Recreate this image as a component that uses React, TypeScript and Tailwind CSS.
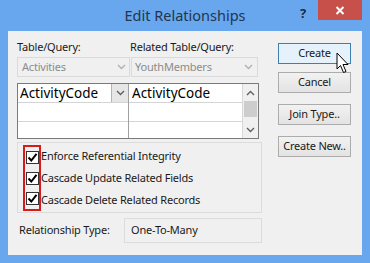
const FONT = { fontFamily: '"Noto Sans", "Open Sans", sans-serif' };

function Chevron({ up = false, color = "#606060" }: { up?: boolean; color?: string }) {
  return (
    <svg width="9" height="6" viewBox="0 0 9 6" className={up ? "rotate-180" : ""}>
      <path d="M1 1 L4.5 4.5 L8 1" fill="none" stroke={color} strokeWidth="1.4" />
    </svg>
  );
}

function Check() {
  return (
    <span className="flex h-[13px] w-[13px] items-center justify-center border border-[#333] bg-white">
      <svg width="11" height="11" viewBox="0 0 11 11">
        <path d="M1.5 5.5 L4.3 8.5 L9.5 1.8" fill="none" stroke="#000" strokeWidth="2" />
      </svg>
    </span>
  );
}

function Btn({ label, active = false }: { label: string; active?: boolean }) {
  return (
    <div
      className={
        "flex h-[21px] w-[73px] items-center justify-center whitespace-nowrap border " +
        (active
          ? "border-[#3c7fb1] bg-[#e5f1fb]"
          : "border-[#acacac] bg-gradient-to-b from-[#f2f2f2] to-[#e3e3e3]")
      }
    >
      {label}
    </div>
  );
}

export default function App() {
  const checks = [
    "Enforce Referential Integrity",
    "Cascade Update Related Fields",
    "Cascade Delete Related Records",
  ];
  return (
    <div className="relative flex h-[263px] w-[370px] flex-col bg-[#68a7ee]" style={FONT}>
      {/* title bar */}
      <div className="relative flex h-[31px] items-center justify-center">
        <span className="text-[14.5px] text-[#23344d]">Edit Relationships</span>
        <span className="absolute left-[300px] top-[4px] text-[13px] font-bold text-[#1b2c46]">?</span>
        <div className="absolute left-[318px] top-0 flex h-[20px] w-[44px] items-center justify-center bg-[#c7504a]">
          <svg width="10" height="9" viewBox="0 0 10 9">
            <path d="M1.5 1 L8.5 8 M8.5 1 L1.5 8" stroke="#fff" strokeWidth="2" />
          </svg>
        </div>
      </div>

      {/* client area */}
      <div className="mx-[8px] flex h-[224px] gap-[16px] whitespace-nowrap bg-[#f0f0f0] pl-[9px] pt-[8px] text-[11px] tracking-[-0.2px] text-[#1a1a1a]">
        {/* left column */}
        <div className="flex w-[245px] flex-col">
          <div className="flex h-[16px] items-center">
            <span className="w-[113px]">Table/Query:</span>
            <span>Related Table/Query:</span>
          </div>
          <div className="mt-[2px] flex h-[20px] text-[#8c8c8c]">
            <div className="flex w-[113px] items-center justify-between border border-[#dadada] pl-[4px] pr-[3px]">
              <span>Activities</span>
              <Chevron color="#b0b0b0" />
            </div>
            <div className="ml-[1px] flex w-[127px] items-center justify-between border border-[#dadada] pl-[3px] pr-[4px]">
              <span>YouthMembers</span>
              <Chevron color="#b0b0b0" />
            </div>
          </div>

          {/* grid */}
          <div className="mt-[6px] flex h-[56px] w-[242px] border border-[#7a7a7a] bg-white text-[13.5px] tracking-normal text-black">
            <div className="flex w-[111px] flex-col border-r border-[#a0a0a0]">
              <div className="flex h-[19px] items-center justify-between border-b border-[#d4d4d4] pl-[2px]">
                <span>ActivityCode</span>
                <span className="flex h-[18px] w-[17px] items-center justify-center border-l border-[#b4b4b4] bg-[#e6e6e6]">
                  <Chevron />
                </span>
              </div>
              <div className="h-[19px] border-b border-[#d4d4d4]" />
              <div className="flex-1" />
            </div>
            <div className="flex w-[113px] flex-col">
              <div className="flex h-[19px] items-center border-b border-[#d4d4d4] pl-[3px]">
                <span>ActivityCode</span>
              </div>
              <div className="h-[19px] border-b border-[#d4d4d4]" />
              <div className="flex-1" />
            </div>
            <div className="flex w-[16px] flex-col border-l border-[#d8d8d8] bg-[#f0f0f0]">
              <div className="flex h-[17px] items-center justify-center">
                <Chevron up />
              </div>
              <div className="mx-[1px] h-[16px] bg-[#cdcdcd]" />
              <div className="flex-1" />
              <div className="flex h-[17px] items-center justify-center">
                <Chevron />
              </div>
            </div>
          </div>

          {/* checkbox panel */}
          <div className="mt-[3px] flex h-[71px] border border-[#dcdcdc] pl-[5px] pt-[2px]">
            <div className="flex h-[66px] w-[18px] flex-col items-center border-2 border-[#d91a1a]">
              {checks.map((c) => (
                <div key={c} className="flex h-[21px] items-center">
                  <Check />
                </div>
              ))}
            </div>
            <div className="flex flex-col">
              {checks.map((c) => (
                <div key={c} className="flex h-[22px] items-center">
                  {c}
                </div>
              ))}
            </div>
          </div>

          {/* relationship type */}
          <div className="mt-[5px] flex h-[25px] items-center">
            <span className="w-[107px] pl-[2px]">Relationship Type:</span>
            <div className="flex h-full flex-1 items-center border border-[#dcdcdc] pl-[6px]">One-To-Many</div>
          </div>
        </div>

        {/* right column */}
        <div className="flex flex-col pt-[4px]">
          <Btn label="Create" active />
          <div className="mt-[8px]">
            <Btn label="Cancel" />
          </div>
          <div className="mt-[11px]">
            <Btn label="Join Type.." />
          </div>
          <div className="mt-[11px]">
            <Btn label="Create New.." />
          </div>
        </div>
      </div>

      {/* mouse cursor */}
      <svg className="absolute left-[336px] top-[52px]" width="14" height="22" viewBox="0 0 14 22">
        <path
          d="M1 1 L1 17 L4.5 13.5 L7.5 20.5 L10 19.5 L7 12.5 L12 12.5 Z"
          fill="#fff"
          stroke="#000"
          strokeWidth="1"
          strokeLinejoin="round"
        />
      </svg>
    </div>
  );
}
